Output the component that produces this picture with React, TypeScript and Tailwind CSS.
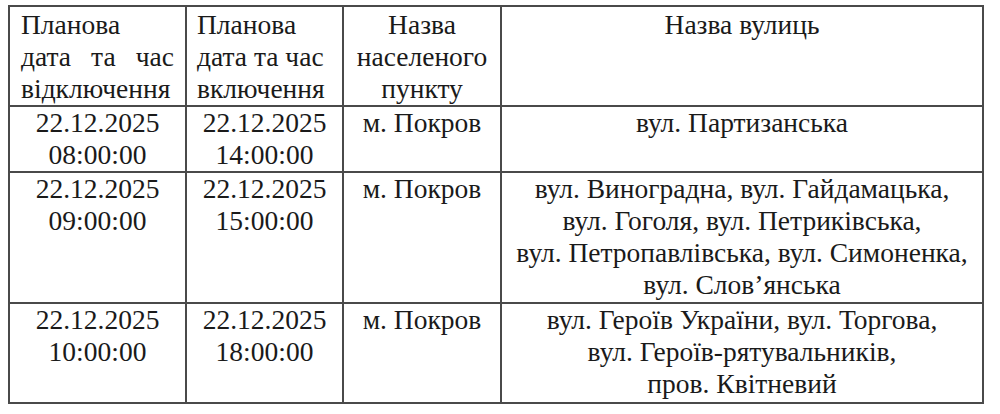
import React from 'react';

// Rows of the outage schedule
const ROWS = [
  {
    off: ['22.12.2025', '08:00:00'],
    on: ['22.12.2025', '14:00:00'],
    place: 'м. Покров',
    streets: ['вул. Партизанська'],
  },
  {
    off: ['22.12.2025', '09:00:00'],
    on: ['22.12.2025', '15:00:00'],
    place: 'м. Покров',
    streets: [
      'вул. Виноградна, вул. Гайдамацька,',
      'вул. Гоголя, вул. Петриківська,',
      'вул. Петропавлівська, вул. Симоненка,',
      'вул. Слов’янська',
    ],
  },
  {
    off: ['22.12.2025', '10:00:00'],
    on: ['22.12.2025', '18:00:00'],
    place: 'м. Покров',
    streets: [
      'вул. Героїв України, вул. Торгова,',
      'вул. Героїв-рятувальників,',
      'пров. Квітневий',
    ],
  },
];

const cell = 'border-r-2 border-b-2 border-[#4a4a4a] text-center whitespace-nowrap';

const App = () => {
  return (
    <div className="w-[1000px] h-[414px] bg-white pt-[5px] pl-[8px] font-['Liberation_Serif','Times_New_Roman',serif] text-[27.5px] leading-[32px] text-[#1a1a1a]">
      <div className="grid grid-cols-[177px_157px_158px_482px] grid-rows-[100px_66px_131px_100px] w-[976px] border-t-2 border-l-2 border-[#4a4a4a]">
        {/* header */}
        <div className="border-r-2 border-b-2 border-[#4a4a4a] px-[11px] pt-[2px] text-left whitespace-nowrap">
          <div>Планова</div>
          <div className="flex justify-between">
            <span>дата</span>
            <span>та</span>
            <span>час</span>
          </div>
          <div>відключення</div>
        </div>
        <div className="border-r-2 border-b-2 border-[#4a4a4a] px-[10px] pt-[2px] text-left whitespace-nowrap">
          <div>Планова</div>
          <div>дата та час</div>
          <div>включення</div>
        </div>
        <div className={`${cell} pt-[2px]`}>
          <div>Назва</div>
          <div>населеного</div>
          <div>пункту</div>
        </div>
        <div className={`${cell} pt-[2px]`}>
          <div>Назва вулиць</div>
        </div>

        {ROWS.map((row, i) => (
          <React.Fragment key={i}>
            <div className={cell}>
              {row.off.map((t) => (
                <div key={t}>{t}</div>
              ))}
            </div>
            <div className={cell}>
              {row.on.map((t) => (
                <div key={t}>{t}</div>
              ))}
            </div>
            <div className={cell}>
              <div>{row.place}</div>
            </div>
            <div className={cell}>
              {row.streets.map((s) => (
                <div key={s}>{s}</div>
              ))}
            </div>
          </React.Fragment>
        ))}
      </div>
    </div>
  );
};

export default App;
